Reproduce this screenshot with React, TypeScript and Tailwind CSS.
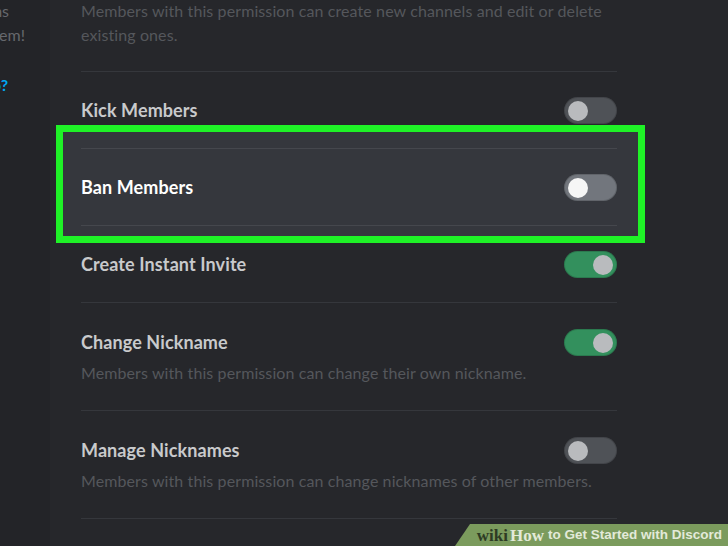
import React from "react";

type Perm = {
  title: string;
  desc?: string;
  on: boolean;
  highlight?: boolean;
};

const perms: Perm[] = [
  { title: "Kick Members", on: false },
  { title: "Ban Members", on: false, highlight: true },
  { title: "Create Instant Invite", on: true },
  {
    title: "Change Nickname",
    desc: "Members with this permission can change their own nickname.",
    on: true,
  },
  {
    title: "Manage Nicknames",
    desc: "Members with this permission can change nicknames of other members.",
    on: false,
  },
];

const Toggle = ({ on, hover }: { on: boolean; hover?: boolean }) => (
  <div
    className={`w-[53px] h-[27px] rounded-full flex items-center px-[4px] shrink-0 shadow-[inset_0_0_0_1px_rgba(0,0,0,0.15)] ${
      on ? "bg-[#33905d] justify-end" : hover ? "bg-[#72767d] justify-start" : "bg-[#4f5257] justify-start"
    }`}
  >
    <div
      className={`w-[20px] h-[20px] rounded-full ${hover ? "bg-[#f6f6f6]" : "bg-[#b9bbbe]"}`}
    />
  </div>
);

const Row = ({ p }: { p: Perm }) => (
  <div className={`flex flex-col ${p.desc ? "pt-[26px] pb-[25px]" : "pt-[25px] pb-[24px]"}`}>
    <div className="flex items-center justify-between h-[27px]">
      <span
        className={`text-[18px] font-bold tracking-[0.1px] ${
          p.highlight ? "text-white" : "text-[#c9cacc]"
        }`}
      >
        {p.title}
      </span>
      <Toggle on={p.on} hover={p.highlight} />
    </div>
    {p.desc && (
      <p className="text-[16px] leading-[24px] tracking-[0.1px] text-[#55575c] mt-[5px]">
        {p.desc}
      </p>
    )}
  </div>
);

const Divider = ({ light }: { light?: boolean }) => (
  <div className={`h-px ${light ? "bg-[#45474d]" : "bg-[#35373c]"}`} />
);

export default function App() {
  return (
    <div
      className="w-[728px] h-[546px] overflow-hidden relative flex bg-[#26272b]"
      style={{ fontFamily: "Lato, 'Open Sans', sans-serif" }}
    >
      {/* left sidebar, cut off */}
      <div className="w-[50px] shrink-0 bg-[#232428] overflow-hidden text-[16px] leading-[24px] text-[#66686d] -mt-px">
        <div className="w-[9px] flex justify-end whitespace-nowrap">the permissions</div>
        <div className="w-[25px] flex justify-end whitespace-nowrap">to help them!</div>
        <div className="w-[8px] flex justify-end whitespace-nowrap mt-[26px] font-bold text-[#00a8f0]">
          Need help?
        </div>
      </div>

      {/* permissions column */}
      <div className="w-[536px] ml-[31px] flex flex-col -mt-px">
        <p className="text-[16px] leading-[24px] tracking-[0.1px] text-[#55575c] pb-[24px]">
          Members with this permission can create new channels and edit or delete
          existing ones.
        </p>
        <Divider />
        {perms.map((p) =>
          p.highlight ? (
            <div
              key={p.title}
              className="-mt-[23px] -mb-[17px] -ml-[25px] -mr-[28px] border-[7px] border-[#1ff227] bg-[#35373d] pl-[18px] pr-[21px] pt-[16px] pb-[10px]"
            >
              <Divider light />
              <Row p={p} />
              <Divider light />
            </div>
          ) : (
            <React.Fragment key={p.title}>
              <Row p={p} />
              {p.title !== "Kick Members" && <Divider />}
            </React.Fragment>
          )
        )}
      </div>

      {/* wikiHow watermark */}
      <div className="absolute right-0 bottom-0 w-[273px] h-[22px] bg-[#7b9b5d] [clip-path:polygon(15px_0,100%_0,100%_100%,0_100%)] flex items-center justify-end pr-[6px]">
        <span
          className="text-[17px] font-bold text-[#2e3b24] leading-none"
          style={{ fontFamily: "'Liberation Serif', serif" }}
        >
          wiki
        </span>
        <span
          className="text-[17px] font-bold text-[#e3ead9] leading-none ml-[2px]"
          style={{ fontFamily: "'Liberation Serif', serif" }}
        >
          How
        </span>
        <span
          className="text-[13.5px] font-bold text-[#e3ead9] leading-none ml-[4px]"
          style={{ fontFamily: "'Liberation Sans', Arial, sans-serif" }}
        >
          to Get Started with Discord
        </span>
      </div>
    </div>
  );
}
